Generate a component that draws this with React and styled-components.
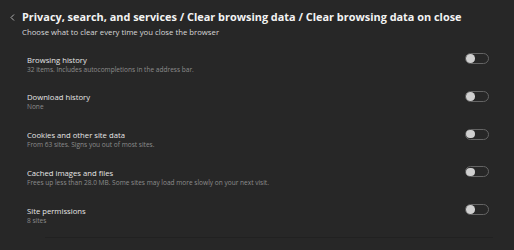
import React from "react";
import styled, { createGlobalStyle } from "styled-components";

const Global = createGlobalStyle`
  html, body { margin: 0; padding: 0; background: #272727; }
  body { font-family: "Open Sans", "Liberation Sans", sans-serif; -webkit-font-smoothing: antialiased; }
`;

const Page = styled.div`
  width: 514px;
  height: 250px;
  background: #272727;
  box-sizing: border-box;
  padding-top: 10px;
  overflow: hidden;
`;

const Header = styled.div`
  display: flex;
  align-items: center;
  gap: 6px;
  padding-left: 9px;
`;

const Back = styled.svg`
  width: 7px;
  height: 9px;
  flex: none;
`;

const Title = styled.h1`
  margin: 0;
  font-weight: 700;
  font-size: 10.9px;
  line-height: 14px;
  color: #f3f3f3;
  white-space: nowrap;
`;

const Sub = styled.div`
  margin: 3px 0 0 22px;
  font-size: 7.75px;
  line-height: 10px;
  color: #d8d8d8;
`;

const List = styled.div`
  margin: 17.5px 25.5px 0 27px;
  display: flex;
  flex-direction: column;
`;

const Row = styled.div`
  display: flex;
  justify-content: space-between;
  align-items: flex-start;
  height: 37.75px;
`;

const Texts = styled.div`
  display: flex;
  flex-direction: column;
`;

const RowTitle = styled.div`
  font-size: 7.7px;
  line-height: 10px;
  color: #e6e6e6;
`;

const Desc = styled.div`
  font-size: 6.55px;
  line-height: 9px;
  color: #8c8c8c;
`;

const Toggle = styled.div`
  width: 24px;
  height: 11px;
  box-sizing: border-box;
  border: 1px solid #646464;
  border-radius: 6px;
  margin-top: -1.4px;
  display: flex;
  align-items: center;
  padding-left: 0.7px;
`;

const Knob = styled.div`
  width: 8.6px;
  height: 8.6px;
  border-radius: 50%;
  background: #d0d0d0;
`;

const Divider = styled.div`
  margin: -6px 21px 0 45px;
  height: 1px;
  background: #212121;
`;

const rows = [
  ["Browsing history", "32 items. Includes autocompletions in the address bar."],
  ["Download history", "None"],
  ["Cookies and other site data", "From 63 sites. Signs you out of most sites."],
  ["Cached images and files", "Frees up less than 28.0 MB. Some sites may load more slowly on your next visit."],
  ["Site permissions", "8 sites"],
];

export default function App() {
  return (
    <Page>
      <Global />
      <Header>
        <Back viewBox="0 0 7 9">
          <path d="M5 1.5 L2 4.5 L5 7.5" stroke="#b0b0b0" strokeWidth="1" fill="none" />
        </Back>
        <Title>Privacy, search, and services / Clear browsing data / Clear browsing data on close</Title>
      </Header>
      <Sub>Choose what to clear every time you close the browser</Sub>
      <List>
        {rows.map(([t, d]) => (
          <Row key={t}>
            <Texts>
              <RowTitle>{t}</RowTitle>
              <Desc>{d}</Desc>
            </Texts>
            <Toggle>
              <Knob />
            </Toggle>
          </Row>
        ))}
      </List>
      <Divider />
    </Page>
  );
}
